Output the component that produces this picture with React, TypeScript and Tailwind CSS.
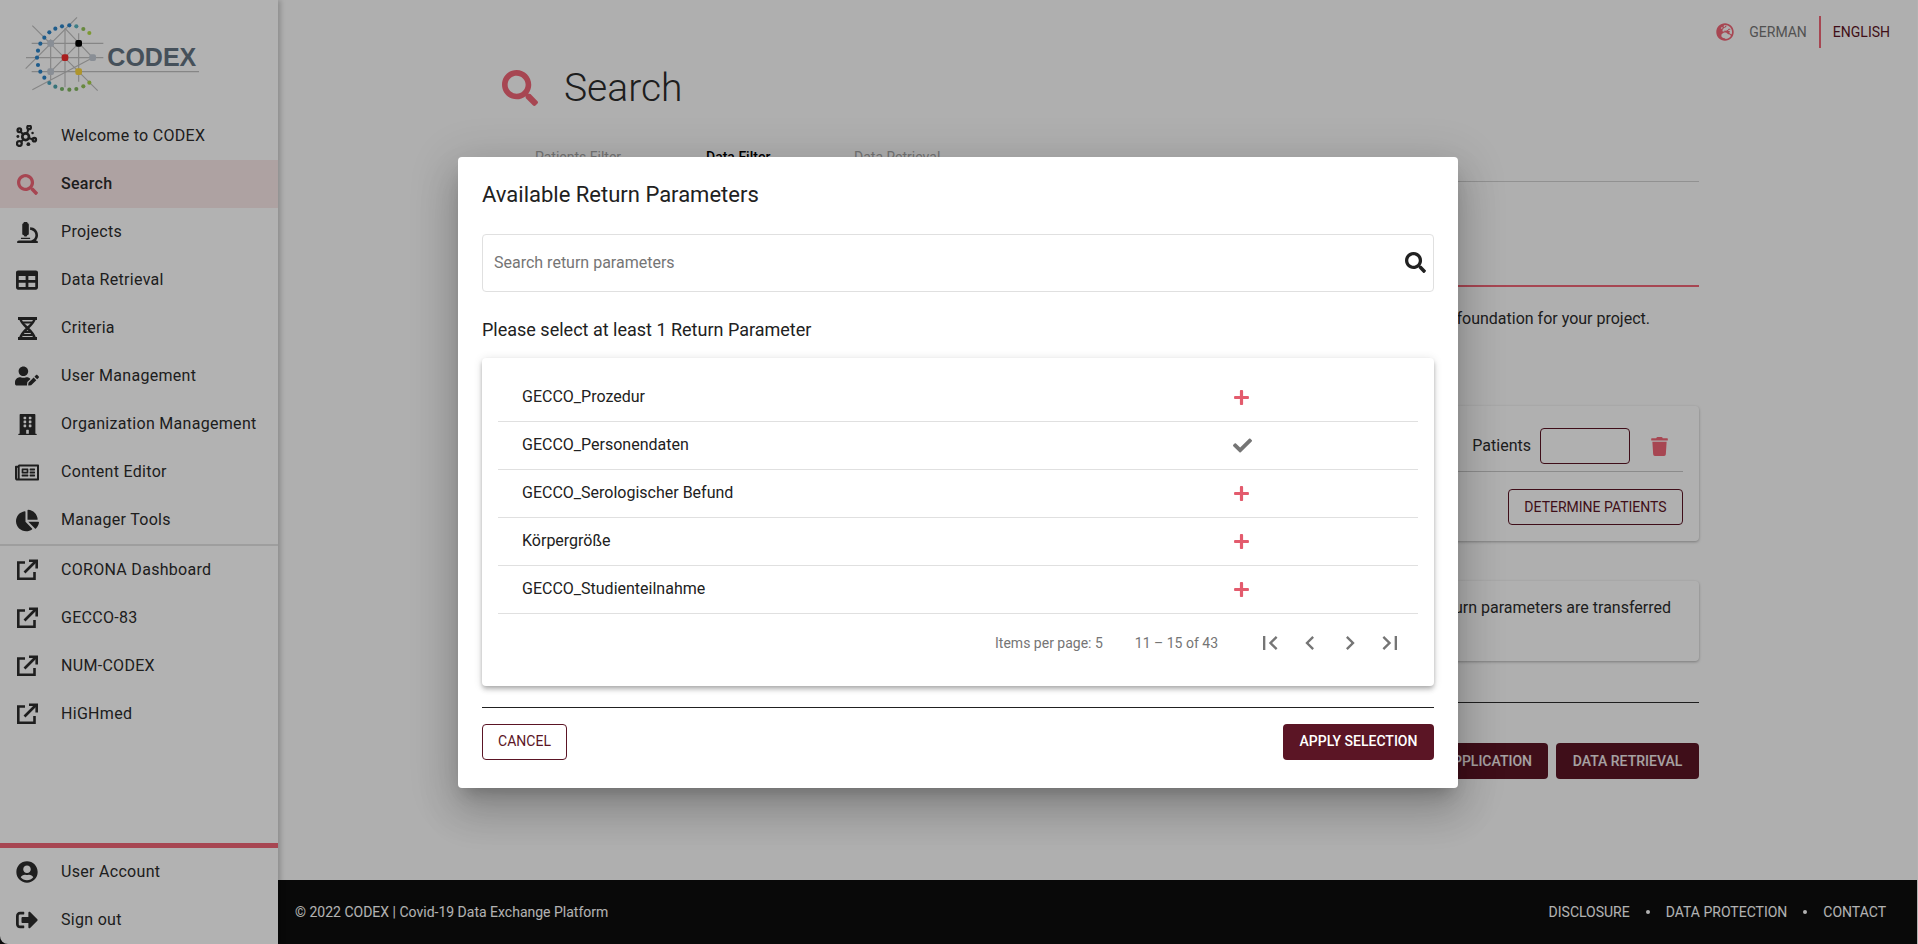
import React from "react";
import { FaSearch, FaMicroscope, FaTable, FaUserEdit, FaBuilding, FaRegNewspaper, FaChartPie, FaUserCircle, FaSignOutAlt, FaGlobeEurope, FaTrash, FaPlus, FaCheck } from "react-icons/fa";
import { MdFirstPage, MdChevronLeft, MdChevronRight, MdLastPage } from "react-icons/md";

const Molecule = () => (
  <svg width="22" height="22" viewBox="7.5 10 21 21" fill="none" stroke="currentColor" strokeWidth="2.2">
    <path d="M16.7 21.7L20 12.3M16.7 21.7L10.7 15M16.7 21.7L10.7 27.7M16.7 21.7L25 24" strokeWidth="2" />
    <circle cx="16.7" cy="21.2" r="3.2" fill="#fff" strokeWidth="2.6" />
    <circle cx="20" cy="12.3" r="1.7" fill="#fff" />
    <circle cx="10.7" cy="15" r="1.7" fill="#fff" />
    <circle cx="10.7" cy="27.7" r="2.3" fill="#fff" />
    <circle cx="25" cy="24" r="1.6" fill="#fff" />
    <circle cx="9.3" cy="21" r="1.4" fill="currentColor" stroke="none" />
    <circle cx="19.3" cy="28.3" r="1.8" fill="currentColor" stroke="none" />
    <circle cx="23.3" cy="17.7" r="1.2" fill="currentColor" stroke="none" />
  </svg>
);

const Dna = () => (
  <svg width="21" height="23" viewBox="0 0 21 23" fill="none" stroke="currentColor" strokeWidth="2.6">
    <path d="M1 1.5H20M1 21.5H20" strokeWidth="2.8" />
    <path d="M3.5 2C4 8 17 14 17.5 21M17.5 2C17 8 4 14 3.5 21" />
    <path d="M6 5.5H15M5.5 18H15.5M8 15H13" strokeWidth="2" />
  </svg>
);

const External = () => (
  <svg width="22" height="22" viewBox="0 0 22 22" fill="none" stroke="currentColor" strokeWidth="2.6">
    <path d="M9 3.5H2.3V19.7H18.5V13" />
    <path d="M8.5 13.5L20 2" />
    <path d="M13 1.8H20.7V9.5" />
  </svg>
);

const Logo = () => {
  const dots: [number, number, string][] = [
    [268, 99, "#b4dc4a"], [250, 87, "#94c55a"], [229, 79, "#5ab5c0"], [208, 76, "#2c84c8"], [186, 79, "#2c84c8"], [166, 86, "#2c84c8"], [148, 97, "#2c84c8"],
    [133, 113, "#2c84c8"], [121, 131, "#2c84c8"], [114, 152, "#2c84c8"], [111, 173, "#2c84c8"], [114, 195, "#2c84c8"], [121, 215, "#2c84c8"], [133, 233, "#2c84c8"],
    [148, 249, "#4aa5c0"], [166, 260, "#50a5ad"], [186, 267, "#7ab86a"], [208, 269, "#84b860"], [229, 267, "#84b860"], [250, 259, "#94c55a"], [268, 248, "#a8d24a"],
  ];
  const nodes: [number, number, string][] = [
    [152, 130, "#c4ccd6"], [236, 130, "#000000"], [195, 173, "#f32c2c"], [278, 173, "#c4ccd6"], [152, 215, "#c4ccd6"], [236, 215, "#fbd63f"],
  ];
  return (
    <svg width="220" height="110" viewBox="0 0 660 330" className="block">
      <g stroke="#c0c0c0" strokeWidth="3.5" fill="none">
        <path d="M95 130H310M78 173H310M95 215H597M152 118V240M195 85V262M236 100V245" />
        <path d="M77 206L231 52M97 77L293 272M97 269L278 173M195 85L278 173M236 130L152 215" />
      </g>
      {dots.map(([x, y, c]) => (
        <circle key={x + "-" + y} cx={x} cy={y} r="6.2" fill={c} />
      ))}
      {nodes.map(([x, y, c]) => (
        <rect key={x + "-" + y} x={x - 10} y={y - 10} width="20" height="20" rx="6" fill={c} />
      ))}
      <text x="322" y="198" fontFamily="Liberation Sans" fontWeight="700" fontSize="75" fill="#647382">CODEX</text>
    </svg>
  );
};

const Item = ({ icon, label, active }: { icon: React.ReactNode; label: string; active?: boolean }) => (
  <div className={active ? "flex h-12 items-center gap-[22px] bg-[#f9e8e9] pl-[15px] font-medium" : "flex h-12 items-center gap-[22px] pl-[15px]"}>
    <span className={active ? "flex w-6 justify-center text-[#ef6576]" : "flex w-6 justify-center text-[#2c2c2c]"}>{icon}</span>
    <span className="text-[16px] tracking-[0.3px] text-[#2c2c2c]">{label}</span>
  </div>
);

const rows = ["GECCO_Prozedur", "GECCO_Personendaten", "GECCO_Serologischer Befund", "Körpergröße", "GECCO_Studienteilnahme"];

export default function App() {
  return (
    <div className="relative flex h-[944px] w-[1918px] overflow-hidden bg-[#fbfbfb] font-['Roboto',sans-serif] text-[#2c2c2c]">
      <div className="relative z-10 flex h-full w-[278px] shrink-0 bg-[#121212]">
        <aside className="flex w-full flex-col rounded-bl-[8px] bg-white shadow-[3px_0_5px_rgba(0,0,0,0.18)]">
          <div className="h-[112px] shrink-0"><Logo /></div>
          <Item icon={<Molecule />} label="Welcome to CODEX" />
          <Item icon={<FaSearch size={21} />} label="Search" active />
          <Item icon={<FaMicroscope size={21} />} label="Projects" />
          <Item icon={<FaTable size={22} />} label="Data Retrieval" />
          <Item icon={<Dna />} label="Criteria" />
          <Item icon={<FaUserEdit size={26} />} label="User Management" />
          <Item icon={<FaBuilding size={21} />} label="Organization Management" />
          <Item icon={<FaRegNewspaper size={25} />} label="Content Editor" />
          <Item icon={<FaChartPie size={23} />} label="Manager Tools" />
          <div className="h-[2px] bg-[#e2e2e2]" />
          <Item icon={<External />} label="CORONA Dashboard" />
          <Item icon={<External />} label="GECCO-83" />
          <Item icon={<External />} label="NUM-CODEX" />
          <Item icon={<External />} label="HiGHmed" />
          <div className="flex-1" />
          <div className="h-[5px] bg-[#ef6576]" />
          <Item icon={<FaUserCircle size={22} />} label="User Account" />
          <Item icon={<FaSignOutAlt size={22} />} label="Sign out" />
        </aside>
      </div>

      <main className="flex h-full min-w-0 flex-1 flex-col border-r border-white">
        <div className="flex h-16 shrink-0 items-center justify-end pr-[27px] text-[14px]">
          <FaGlobeEurope size={18} className="mr-[15px] text-[#ef6576]" />
          <span className="text-[#757575]">GERMAN</span>
          <span className="mx-[12px] h-8 w-[2px] bg-[#ef6576]" />
          <span className="text-[#5b1525]">ENGLISH</span>
        </div>
        <div className="ml-[224px] flex w-[1197px] flex-1 flex-col">
          <div className="flex h-[47px] shrink-0 items-center">
            <FaSearch size={36} className="text-[#ef6576]" />
            <h1 className="ml-[26px] text-[39px] font-light leading-[48px] text-[#2c2c2c]">Search</h1>
          </div>
          <div className="flex h-[71px] shrink-0 items-end border-b border-[#d0d0d0] pb-[13px] text-[14px]">
            <span className="ml-[33px] w-[171px] text-[#a6a6a6]">Patients Filter</span>
            <span className="w-[148px] font-medium text-black">Data Filter</span>
            <span className="text-[#a6a6a6]">Data Retrieval</span>
          </div>
          <div className="h-[105px] shrink-0 border-b-2 border-[#ef6576]" />
          <p className="mt-[22px] h-[97px] shrink-0 pr-[49px] text-right text-[16px] leading-5">Create your filter criteria. It will be the foundation for your project.</p>
          <div className="flex h-[135px] shrink-0 flex-col rounded-[4px] bg-[#fdfdfd] px-4 shadow-[0_1px_3px_rgba(0,0,0,0.3)]">
            <div className="flex h-[66px] shrink-0 items-center justify-end border-b border-[#c8c8c8] pt-[15px]">
              <span className="text-[16px]">Patients</span>
              <span className="ml-[9px] h-9 w-[90px] rounded-[4px] border border-[#5b1525]" />
              <FaTrash size={19} className="ml-[20px] mr-[14px] text-[#ef6576]" />
            </div>
            <div className="flex justify-end pt-[17px]">
              <span className="flex h-9 w-[175px] items-center justify-center rounded-[4px] border border-[#5b1525] text-[14px] text-[#5b1525]">DETERMINE PATIENTS</span>
            </div>
          </div>
          <div className="mt-[40px] flex h-[80px] shrink-0 justify-end rounded-[4px] bg-[#fdfdfd] pr-[28px] pt-[17px] text-[16px] leading-5 shadow-[0_1px_3px_rgba(0,0,0,0.3)]">
            The selected return parameters are transferred
          </div>
          <div className="mt-[41px] h-px shrink-0 bg-[#2c2c2c]" />
          <div className="mt-[40px] flex justify-end gap-2">
            <span className="flex h-9 items-center justify-center rounded-[4px] bg-[#5b1525] px-4 text-[14px] font-medium text-white/90">CREATE APPLICATION</span>
            <span className="flex h-9 w-[143px] items-center justify-center rounded-[4px] bg-[#5b1525] text-[14px] font-medium text-white/90">DATA RETRIEVAL</span>
          </div>
        </div>
        <footer className="flex h-[64px] shrink-0 items-center justify-between bg-[#0d0d0d] pl-[17px] pr-[31px] text-[14px] text-white">
          <span>© 2022 CODEX | Covid-19 Data Exchange Platform</span>
          <span className="flex items-center gap-[16px]">
            <span>DISCLOSURE</span><span className="h-[4px] w-[4px] rounded-full bg-white" />
            <span>DATA PROTECTION</span><span className="h-[4px] w-[4px] rounded-full bg-white" />
            <span>CONTACT</span>
          </span>
        </footer>
      </main>

      <div className="absolute inset-0 z-20 flex items-center justify-center bg-black/30">
        <div className="flex h-[631px] w-[1000px] -translate-x-px flex-col rounded-[4px] bg-white px-6 pt-[22px] shadow-[0_11px_15px_-7px_rgba(0,0,0,0.2),0_24px_38px_3px_rgba(0,0,0,0.14),0_9px_46px_8px_rgba(0,0,0,0.12)]">
          <h2 className="text-[22px] leading-8 text-[#212121]">Available Return Parameters</h2>
          <div className="mt-[23px] flex h-[58px] shrink-0 items-center justify-between rounded-[4px] border border-[#e0e0e0] pl-[11px] pr-[7px]">
            <span className="text-[16px] text-[#757575]">Search return parameters</span>
            <FaSearch size={21} className="text-[#212121]" />
          </div>
          <p className="mt-[26px] text-[18px] leading-[24px] text-[#212121]">Please select at least 1 Return Parameter</p>
          <div className="mt-[16px] flex h-[328px] shrink-0 flex-col rounded-[4px] bg-white px-4 pt-4 shadow-[0_2px_4px_-1px_rgba(0,0,0,0.2),0_4px_5px_0_rgba(0,0,0,0.14),0_1px_10px_0_rgba(0,0,0,0.12)]">
            {rows.map((r, i) => (
              <div key={r} className="flex h-12 shrink-0 items-center border-b border-[#e0e0e0] pl-6 text-[16px] text-[#212121]">
                <span className="w-[711px]">{r}</span>
                {i === 1 ? <FaCheck size={19} className="text-[#757575]" /> : <FaPlus size={17} className="text-[#e35b6d]" />}
              </div>
            ))}
            <div className="flex h-[59px] items-center justify-end text-[14px] text-[#757575]">
              <span>Items per page: 5</span>
              <span className="ml-8 mr-[32px]">11 – 15 of 43</span>
              <span className="flex w-10 justify-center"><MdFirstPage size={28} /></span>
              <span className="flex w-10 justify-center"><MdChevronLeft size={28} /></span>
              <span className="flex w-10 justify-center"><MdChevronRight size={28} /></span>
              <span className="flex w-10 justify-center"><MdLastPage size={28} /></span>
              <span className="w-2" />
            </div>
          </div>
          <div className="mt-[21px] h-px bg-[#212121]" />
          <div className="mt-4 flex justify-between">
            <span className="flex h-9 w-[85px] items-center justify-center rounded-[4px] border border-[#5b1525] text-[14px] text-[#5b1525]">CANCEL</span>
            <span className="flex h-9 w-[151px] items-center justify-center rounded-[4px] bg-[#5b1525] text-[14px] font-medium text-white">APPLY SELECTION</span>
          </div>
        </div>
      </div>
    </div>
  );
}
